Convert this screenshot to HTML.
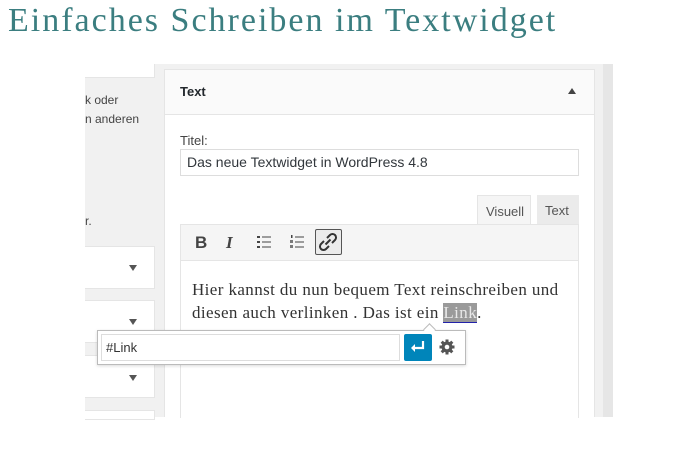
<!DOCTYPE html>
<html><head><meta charset="utf-8"><style>
*{margin:0;padding:0;box-sizing:border-box}
body{width:695px;height:452px;background:#fff;position:relative;overflow:hidden;font-family:"Liberation Sans",sans-serif}
.a{position:absolute}
h1{position:absolute;left:8px;top:2px;font:34px "Liberation Serif",serif;color:#3b7e80;font-weight:normal;letter-spacing:2px;white-space:nowrap}
.lt{font-size:12px;color:#444}
.box{background:#fff;border:1px solid #e5e5e5;border-left:none}
.tri{width:0;height:0;border-left:4px solid transparent;border-right:4px solid transparent;border-top:6px solid #555}
</style></head><body>
<h1>Einfaches Schreiben im Textwidget</h1>
<div class="a" style="left:85px;top:64px;width:528px;height:353px;background:#f1f1f1"></div>
<div class="a" style="left:603px;top:64px;width:10px;height:353px;background:#e6e6e6"></div>
<div class="a box" style="left:85px;top:64px;width:70px;height:14px;border-top:none"></div>
<div class="a lt" style="left:85px;top:91px;line-height:19px">k oder<br>n anderen</div>
<div class="a lt" style="left:85px;top:214px">r.</div>
<div class="a box" style="left:85px;top:246px;width:70px;height:43px"></div>
<div class="a tri" style="left:129px;top:265px"></div>
<div class="a box" style="left:85px;top:300px;width:70px;height:43px"></div>
<div class="a tri" style="left:129px;top:319px"></div>
<div class="a box" style="left:85px;top:355px;width:70px;height:43px"></div>
<div class="a tri" style="left:129px;top:375px"></div>
<div class="a box" style="left:85px;top:410px;width:70px;height:10px"></div>
<div class="a" style="left:164px;top:69px;width:431px;height:348px;background:#fff;border:1px solid #e5e5e5;border-bottom:none"></div>
<div class="a" style="left:165px;top:70px;width:429px;height:45px;background:#fafafa;border-bottom:1px solid #e5e5e5"></div>
<div class="a" style="left:180px;top:84px;font-size:13px;font-weight:bold;color:#23282d">Text</div>
<div class="a" style="left:568px;top:88px;width:0;height:0;border-left:4px solid transparent;border-right:4px solid transparent;border-bottom:6px solid #444"></div>
<div class="a" style="left:180px;top:133px;font-size:13px;color:#444">Titel:</div>
<div class="a" style="left:180px;top:149px;width:399px;height:27px;border:1px solid #ddd;font-size:14px;color:#32373c;padding:4px 6px">Das neue Textwidget in WordPress 4.8</div>
<div class="a" style="left:477px;top:195px;width:54px;height:30px;background:#f5f5f5;border:1px solid #e5e5e5;border-bottom:none;font-size:13px;color:#555;padding:8px 0 0 8px">Visuell</div>
<div class="a" style="left:537px;top:195px;width:42px;height:29px;background:#ebebeb;font-size:13px;color:#555;padding:8px 0 0 8px">Text</div>
<div class="a" style="left:180px;top:224px;width:399px;height:194px;border:1px solid #e5e5e5;border-bottom:none"></div>
<div class="a" style="left:181px;top:225px;width:397px;height:36px;background:#f5f5f5;border-bottom:1px solid #e5e5e5"></div>
<div class="a" style="left:195px;top:233px;font-size:17px;font-weight:bold;color:#444">B</div>
<div class="a" style="left:226px;top:233px;font:italic bold 17px 'Liberation Serif',serif;color:#444">I</div>
<svg class="a" style="left:256px;top:234px" width="16" height="16"><g fill="#444"><rect x="1" y="2" width="3" height="2"/><rect x="1" y="7" width="3" height="2"/><rect x="1" y="12" width="3" height="2"/><rect x="6" y="2.5" width="9" height="1"/><rect x="6" y="7.5" width="9" height="1"/><rect x="6" y="12.5" width="9" height="1"/></g></svg>
<svg class="a" style="left:289px;top:234px" width="16" height="16"><g fill="#444"><rect x="2" y="1" width="1.5" height="3"/><rect x="1" y="6" width="3" height="3" opacity=".7"/><rect x="1" y="11" width="3" height="3" opacity=".7"/><rect x="6" y="2.5" width="9" height="1"/><rect x="6" y="7.5" width="9" height="1"/><rect x="6" y="12.5" width="9" height="1"/></g></svg>
<div class="a" style="left:315px;top:229px;width:27px;height:26px;border:1px solid #555;border-radius:2px;background:#ebebeb"></div>
<svg class="a" style="left:318px;top:232px" width="20" height="20" viewBox="0 0 20 20"><g fill="none" stroke="#333" stroke-width="2"><path d="M9 6l3-3a3 3 0 0 1 5 5l-3 3"/><path d="M11 14l-3 3a3 3 0 0 1-5-5l3-3"/><path d="M7.5 12.5l5-5"/></g></svg>
<div class="a" style="left:192px;top:278px;font:17px 'Liberation Serif',serif;color:#333;line-height:23px;letter-spacing:0.4px;white-space:nowrap">Hier kannst du nun bequem Text reinschreiben und<br>diesen auch verlinken . Das ist ein <span style="background:#9a9a9a;color:#e8e8e8;border-bottom:1px solid #2222aa">Link</span>.</div>
<div class="a" style="left:97px;top:330px;width:369px;height:35px;background:#fff;border:1px solid #bbb;box-shadow:0 1px 3px rgba(0,0,0,.15)"></div>
<div class="a" style="left:425px;top:325px;width:9px;height:9px;background:#fff;border-left:1px solid #bbb;border-top:1px solid #bbb;transform:rotate(45deg)"></div>
<div class="a" style="left:101px;top:334px;width:299px;height:27px;border:1px solid #ddd;font-size:13px;color:#333;padding:5px 4px">#Link</div>
<div class="a" style="left:404px;top:334px;width:28px;height:27px;background:#0085ba;border-radius:2px"></div>
<svg class="a" style="left:409px;top:339px" width="18" height="16"><path d="M14 2v7H4" fill="none" stroke="#fff" stroke-width="2.2"/><path d="M2 9l4-4v8z" fill="#fff"/></svg>
<svg class="a" style="left:438px;top:338px" width="18" height="18" viewBox="0 0 18 18"><g fill="#555"><circle cx="9" cy="9" r="5.5"/><g stroke="#555" stroke-width="3"><path d="M9 1.5v15M1.5 9h15M3.7 3.7l10.6 10.6M14.3 3.7L3.7 14.3"/></g></g><circle cx="9" cy="9" r="2.3" fill="#fff"/></svg>
</body></html>
